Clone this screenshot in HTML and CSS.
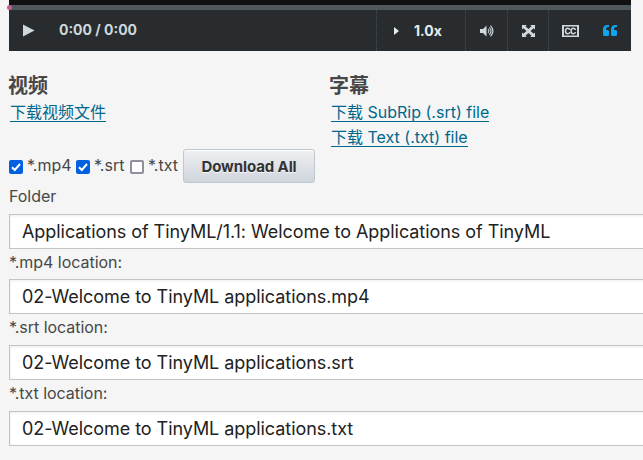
FILE: index.html
```
<!DOCTYPE html>
<html lang="zh-CN">
<head>
<meta charset="utf-8">
<title>TinyML</title>
<link rel="stylesheet" href="styles.css">
</head>
<body>
<section class="player">
  <div class="video"></div>
  <div class="slider"><span class="handle"></span></div>
  <div class="controls">
    <div class="play"><svg width="12" height="13" viewBox="0 0 12 13"><path d="M0 .5 11.5 6.5 0 12.5z" fill="currentColor"/></svg></div>
    <div class="time">0:00 / 0:00</div>
    <div class="speed"><svg width="5" height="8" viewBox="0 0 5 8"><path d="M0 0 5 4 0 8z" fill="currentColor"/></svg><span>1.0x</span></div>
    <div class="control volume"><svg width="14" height="12" viewBox="0 0 14 12"><path d="M0 4h3l3.500-3.500v11L3 8H0z" fill="currentColor"/><path d="M8 4.200q1.800 1.800 0 3.600M9.300 2.400q3.600 3.600 0 7.200M10.500.7q5 5.300 0 10.600" fill="none" stroke="currentColor" stroke-width="1.100"/></svg></div>
    <div class="control full"><svg width="13" height="12" viewBox="0 0 12 12" preserveAspectRatio="none"><path d="M0 0h4.500L3.200 1.300 6 4.100 8.800 1.300 7.500 0H12v4.500l-1.300-1.300L7.900 6l2.800 2.800L12 7.500V12H7.500l1.300-1.300L6 7.900l-2.800 2.800L4.500 12H0V7.500l1.300 1.300L4.100 6 1.300 3.200 0 4.500z" fill="currentColor"/></svg></div>
    <div class="last">
      <svg width="17" height="12" viewBox="0 0 17 12"><path d="M0 0h17v12H0zM2 1.500v9h13v-9z" fill="currentColor" fill-rule="evenodd"/><path d="M7.600 5V4.300Q7.300 3.200 5.700 3.200 3.500 3.200 3.500 6T5.700 8.800Q7.300 8.800 7.600 7.600V7M13.200 5V4.300Q12.900 3.200 11.300 3.200 9.100 3.200 9.100 6t2.200 2.800q1.600 0 1.900-1.200V7" fill="none" stroke="currentColor" stroke-width="1.500"/></svg>
      <svg class="quote" width="14" height="11" viewBox="0 0 14 11"><path d="M6 0v2H5Q3 2 3 4v1h1.500Q6 5 6 6.500v3Q6 11 4.500 11h-3Q0 11 0 9.500V4.500Q0 0 4.500 0zM14 0v2h-1q-2 0-2 2v1h1.500Q14 5 14 6.500v3q0 1.500-1.500 1.500h-3Q8 11 8 9.500v-5Q8 0 12.500 0z" fill="currentColor"/></svg>
    </div>
  </div>
</section>
<section class="downloads">
  <div class="group"><h3>视频</h3><a>下载视频文件</a></div>
  <div class="group"><h3>字幕</h3><a>下载 SubRip (.srt) file</a><a>下载 Text (.txt) file</a></div>
</section>
<div class="options">
  <label><span class="box on"><svg width="14" height="14" viewBox="0 0 14 14"><path d="m3 7.200 2.800 2.800L11 4" fill="none" stroke="#fff" stroke-width="2"/></svg></span>*.mp4</label>
  <label><span class="box on"><svg width="14" height="14" viewBox="0 0 14 14"><path d="m3 7.200 2.800 2.800L11 4" fill="none" stroke="#fff" stroke-width="2"/></svg></span>*.srt</label>
  <label><span class="box"></span>*.txt</label>
  <button>Download All</button>
</div>
<div class="fields">
  <div class="label first">Folder</div><div class="field">Applications of TinyML/1.1: Welcome to Applications of TinyML</div>
  <div class="label mp4">*.mp4 location:</div><div class="field">02-Welcome to TinyML applications.mp4</div>
  <div class="label">*.srt location:</div><div class="field">02-Welcome to TinyML applications.srt</div>
  <div class="label">*.txt location:</div><div class="field">02-Welcome to TinyML applications.txt</div>
</div>
</body>
</html>
```
FILE: styles.css
```
* { box-sizing: border-box; }
html { overflow: hidden; }
body { margin: 0; padding-left: 9px; background: #f5f5f5; color: #474747; font: 16px/25px Inter, "Noto Sans CJK SC", sans-serif; overflow: hidden; height: 460px; }
svg { display: block; flex: none; }
.player { width: 622px; }
.video { height: 5px; background: #111; }
.slider { height: 5px; background: #4f595d; position: relative; }
.handle { position: absolute; left: -2px; top: 0; width: 5px; height: 5px; border-radius: 50%; background: #cb598d; }
.controls { height: 41px; background: #282c2e; color: #cfd8dc; display: flex; align-items: stretch; }
.controls > div { display: flex; align-items: center; }
.play { width: 50px; padding-left: 14px; }
.time { flex: 1; font-size: 14px; font-weight: 700; padding-bottom: 2px; }
.speed { width: 89px; border-left: 1px dotted #465054; padding-left: 17px; gap: 15px; color: #e7ecee; font-size: 14px; font-weight: 700; }
.control { justify-content: center; border-left: 1px dotted #465054; }
.volume { width: 42px; }
.full { width: 41px; }
.last { width: 83px; border-left: 1px dotted #465054; padding-left: 13px; gap: 24px; }
.quote { color: #0ea6ec; }
.downloads { display: flex; height: 98px; padding-top: 21px; }
.group { width: 321px; flex: none; display: flex; flex-direction: column; align-items: flex-start; }
h3 { margin: 0 0 0 -1px; font-size: 20px; line-height: 28px; font-weight: 700; }
.group a { color: #00688d; margin-left: 1px; height: 22px; line-height: 24px; border-bottom: 1px solid #00688d; margin-bottom: 3px; white-space: nowrap; }
.options { display: flex; height: 35px; align-items: flex-start; }
.options label { display: flex; align-items: center; height: 34px; white-space: nowrap; padding-bottom: 2px; }
.options label:nth-child(1) { width: 67px; }
.options label:nth-child(2) { width: 54px; }
.options label:nth-child(3) { width: 53px; }
.box { width: 14px; height: 14px; margin: 3px 4px 0 0; border: 2px solid #8f8f9d; border-radius: 2px; background: #fff; flex: none; }
.box.on { border: 0; background: #0060df; }
button { width: 132px; height: 34px; margin: 0; padding: 0; border: 1px solid #bec8d1; border-radius: 3px; background: linear-gradient(#eef0f1, #d0d5dd); color: #333; font: 700 15px Inter, sans-serif; letter-spacing: -.1px; text-shadow: 0 1px 0 #f8f8f8; box-shadow: inset 0 1px 0 #fff; }
.fields { width: 660px; }
.label { height: 31px; line-height: 27px; letter-spacing: -.04px; }
.label.first { height: 30px; line-height: 25px; }
.label.mp4 { height: 30px; }
.field { height: 35px; padding: 0 12px; border: 1px solid #c4c4c4; background: #fff; color: #222; font-size: 18px; letter-spacing: -.055px; line-height: 33px; white-space: nowrap; box-shadow: inset 0 1px 3px rgba(0, 0, 0, .08); }
```
